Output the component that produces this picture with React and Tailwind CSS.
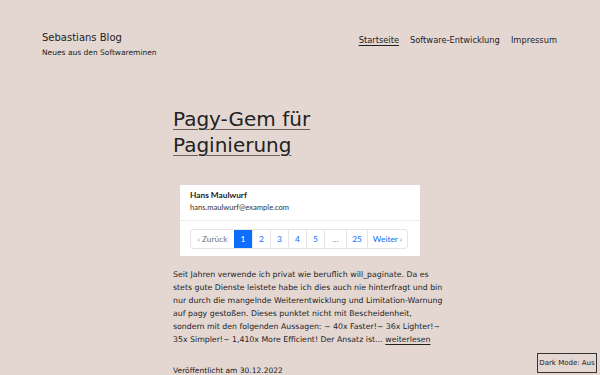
const pages = ['1', '2', '3', '4', '5', '…', '25']

export default function App() {
  return (
    <div className="min-h-screen bg-[#e4d7d2] text-[#222] font-['DejaVu_Sans',sans-serif]">
      <header className="flex items-start justify-between px-[42px] pt-[31px]">
        <div>
          <div className="text-[10px] leading-[14px]">Sebastians Blog</div>
          <div className="mt-[3px] text-[7.5px] leading-[10px]">Neues aus den Softwareminen</div>
        </div>
        <nav className="mr-[1px] mt-[3px] flex gap-[11px] text-[8.3px] leading-[12px]">
          <a className="underline underline-offset-2">Startseite</a>
          <a>Software-Entwicklung</a>
          <a>Impressum</a>
        </nav>
      </header>

      <main className="ml-[173px] w-[272px] pt-[48px]">
        <h1 className="max-w-[200px] text-[20px] leading-[26px]">
          <a className="underline decoration-[#6b6260] decoration-1 underline-offset-[3px]">Pagy-Gem für Paginierung</a>
        </h1>

        <div className="mt-[27px] ml-[7px] w-[240px] bg-white font-['Lato',sans-serif]">
          <div className="px-[10px] pt-[4px] pb-[8px] border-b border-[#eceaea]">
            <div className="text-[8.3px] font-bold leading-[12px] text-[#222]">Hans Maulwurf</div>
            <div className="mt-[1px] text-[7.6px] leading-[10px] text-[#333]">hans.maulwurf@example.com</div>
          </div>
          <div className="px-[10px] pt-[8px] pb-[7px]">
            <div className="flex h-[20px] w-[218px] rounded-[3px] border border-[#e5e5e5] text-[8.4px] text-[#0d6efd]">
              <span className="flex w-[43px] items-center justify-center text-[#777]">‹ Zurück</span>
              {pages.map((p) => (
                <span
                  key={p}
                  className={
                    p === '1'
                      ? 'flex w-[18px] items-center justify-center bg-[#0d6efd] text-white'
                      : p === '…'
                      ? 'flex w-[22px] items-center justify-center border-l border-[#e5e5e5] text-[#777]'
                      : p === '25'
                      ? 'flex w-[21px] items-center justify-center border-l border-[#e5e5e5]'
                      : 'flex w-[18px] items-center justify-center border-l border-[#e5e5e5]'
                  }
                >
                  {p}
                </span>
              ))}
              <span className="flex flex-1 items-center justify-center border-l border-[#e5e5e5]">Weiter ›</span>
            </div>
          </div>
        </div>

        <p className="mt-[12px] text-[7.8px] leading-[13px] text-[#222]">
          Seit Jahren verwende ich privat wie beruflich will_paginate. Da es stets gute Dienste leistete habe ich dies auch nie hinterfragt und bin nur durch die mangelnde Weiterentwicklung und Limitation-Warnung auf pagy gestoßen. Dieses punktet nicht mit Bescheidenheit, sondern mit den folgenden Aussagen: ~ 40x Faster!~ 36x Lighter!~ 35x Simpler!~ 1,410x More Efficient! Der Ansatz ist…{' '}
          <a className="underline underline-offset-2">weiterlesen</a>
        </p>

        <div className="mt-[20px] text-[7.5px] leading-[10px]">Veröffentlicht am 30.12.2022</div>
      </main>

      <button className="fixed bottom-[2px] right-[3px] h-[20px] w-[60px] border border-[#333] bg-[#e4d7d2] text-[7px] text-[#222]">
        Dark Mode: Aus
      </button>
    </div>
  )
}
